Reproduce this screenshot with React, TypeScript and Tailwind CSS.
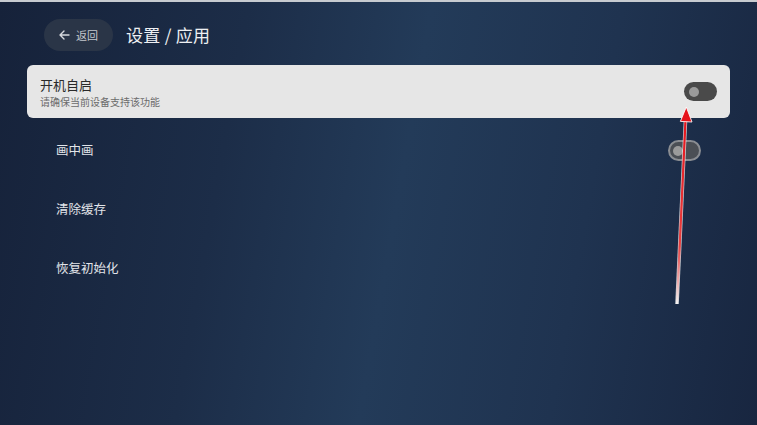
import React from "react";

const Toggle = ({outlined = false}: { outlined?: boolean }) => {
    return (
        <div
            className={
                outlined
                    ? "w-[33px] h-[21px] rounded-full bg-[#4b4f55] border-2 border-[#8a8d92] flex items-center pl-[3px]"
                    : "w-[33px] h-[19px] rounded-full bg-[#4a4a4a] flex items-center pl-[5px]"
            }
        >
            <div className="w-[10px] h-[10px] rounded-full bg-[#9b9b9b]"/>
        </div>
    )
}

const Header = () => {
    return (
        <div className="flex items-center gap-[13px] pl-[44px] pt-[17px]">
            <div className="h-[32px] w-[69px] rounded-full bg-[#2a3547] flex items-center justify-center gap-[6px]">
                <svg width="11" height="10" viewBox="0 0 11 10" fill="none">
                    <path d="M10 5H1.5M5 1L1 5l4 4" stroke="#d6d9de" strokeWidth="1.4" strokeLinecap="round"
                          strokeLinejoin="round"/>
                </svg>
                <span className="text-[11px] text-[#c3c7cd]">返回</span>
            </div>
            <div className="text-[17px] text-[#eef0f3] tracking-[0.3px]">设置 / 应用</div>
        </div>
    )
}

const RowItem = ({label, toggle}: { label: string, toggle?: boolean }) => {
    return (
        <div className="h-[59px] px-[29px] flex items-center justify-between mx-[27px]">
            <div className="text-[12.5px] text-[#e2e5ea]">{label}</div>
            {toggle && <Toggle outlined/>}
        </div>
    )
}

const Arrow = () => {
    return (
        <svg className="absolute left-0 top-0 pointer-events-none" width="757" height="425" viewBox="0 0 757 425">
            <defs>
                <linearGradient id="tail" x1="0" y1="302" x2="0" y2="110" gradientUnits="userSpaceOnUse">
                    <stop offset="0" stopColor="#f4f4f4"/>
                    <stop offset="0.3" stopColor="#e84040"/>
                    <stop offset="1" stopColor="#e6121a"/>
                </linearGradient>
            </defs>
            <line x1="677" y1="302" x2="685.6" y2="116" stroke="#ffffff" strokeOpacity="0.75" strokeWidth="3.6"/>
            <line x1="677" y1="302" x2="685.6" y2="116" stroke="url(#tail)" strokeWidth="2.2"/>
            <path d="M686.3 105 L692 120 L680.4 119.4 Z" fill="#e6121a" stroke="#ffffff" strokeOpacity="0.85"
                  strokeWidth="1" strokeLinejoin="round"/>
        </svg>
    )
}

export default function App() {
    return (
        <div
            className="relative w-full h-[425px] overflow-hidden border-t-2 border-[#c7cbd0] bg-[linear-gradient(100deg,#16223a_0%,#1c2d48_30%,#233b59_52%,#1f3350_75%,#182640_100%)] font-['Noto_Sans_CJK_SC','Noto_Sans',sans-serif]">
            <Header/>
            <div
                className="mx-[27px] mt-[14px] h-[53px] rounded-[6px] bg-[#e6e6e6] px-[13px] flex items-center justify-between">
                <div className="flex flex-col">
                    <div className="text-[13px] leading-[18px] text-[#2a2a2a]">开机自启</div>
                    <div className="text-[10px] leading-[12px] text-[#6b6b6b] mt-[2px]">请确保当前设备支持该功能</div>
                </div>
                <Toggle/>
            </div>
            <div className="mt-[3px]">
                <RowItem label="画中画" toggle/>
                <RowItem label="清除缓存"/>
                <RowItem label="恢复初始化"/>
            </div>
            <Arrow/>
        </div>
    )
}
